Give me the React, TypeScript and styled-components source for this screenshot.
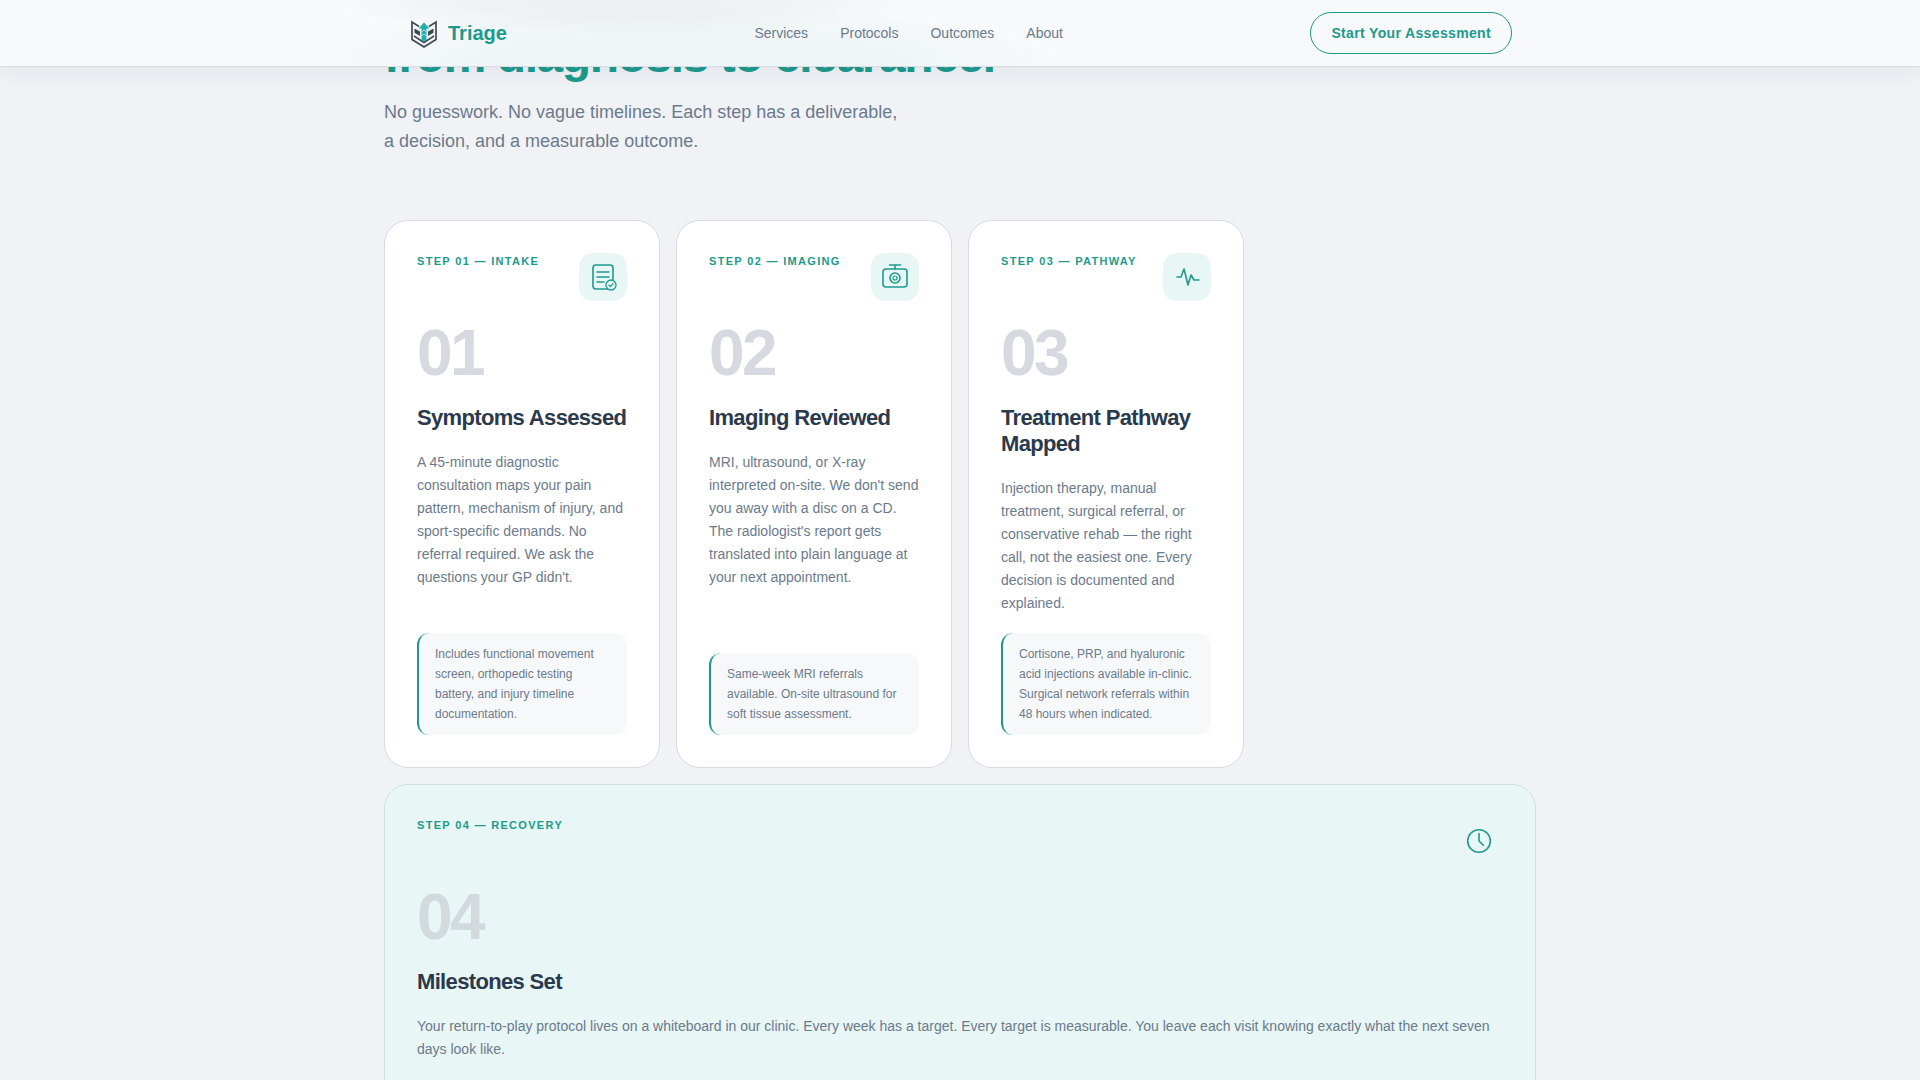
import React from "react";
import styled, { createGlobalStyle } from "styled-components";

const TEAL = "#1d9a8d";
const MUTED = "#6b7a8d";
const INK = "#2a3a4c";

const GlobalStyle = createGlobalStyle`
  *, *::before, *::after { box-sizing: border-box; }
  html { overflow: hidden; }
  body {
    margin: 0;
    background: #f0f2f6;
    color: ${INK};
    font-family: "Liberation Sans", Arial, sans-serif;
  }
  h2, h3, p, ul { margin: 0; padding: 0; }
`;

const Header = styled.header`
  position: sticky;
  top: 0;
  z-index: 10;
  background:
    radial-gradient(
      ellipse 300px 36px at calc(50% - 336px) 0,
      rgba(42, 56, 75, 0.05) 0%,
      rgba(42, 56, 75, 0.04) 50%,
      transparent 100%
    ),
    radial-gradient(
      ellipse 380px 60px at calc(50% - 270px) 100%,
      rgba(29, 154, 141, 0.04) 0%,
      rgba(29, 154, 141, 0.03) 60%,
      transparent 100%
    ),
    #f7f9fb;
  border-bottom: 1px solid #d9dde2;
  box-shadow: 0 4px 24px rgba(30, 41, 59, 0.07);
`;

const NavBar = styled.nav`
  display: flex;
  align-items: center;
  justify-content: space-between;
  max-width: 1152px;
  margin: 0 auto;
  padding: 12px 24px;
`;

const Brand = styled.a`
  display: flex;
  align-items: center;
  gap: 8px;
  color: ${TEAL};
  font-size: 20px;
  font-weight: 700;
  text-decoration: none;
`;

const NavLinks = styled.ul`
  display: flex;
  gap: 32px;
  list-style: none;
`;

const NavLink = styled.a`
  color: ${MUTED};
  font-size: 14px;
  text-decoration: none;
`;

const CtaButton = styled.button`
  height: 42px;
  padding: 0 20px;
  border: 1px solid ${TEAL};
  border-radius: 21px;
  background: transparent;
  color: ${TEAL};
  font: 700 14px "Liberation Sans", Arial, sans-serif;
  letter-spacing: 0.025em;
  cursor: pointer;
`;

const Section = styled.section`
  max-width: 1200px;
  margin: -38px auto 0;
  padding: 0 24px 96px;
`;

const Heading = styled.h2`
  color: ${TEAL};
  font-size: 48px;
  line-height: 53px;
  letter-spacing: -0.03em;
`;

const Lead = styled.p`
  max-width: 520px;
  margin: 16px 0 64px;
  color: ${MUTED};
  font-size: 18px;
  line-height: 29px;
`;

const Steps = styled.div`
  display: grid;
  grid-template-columns: repeat(4, 1fr);
  gap: 16px;
`;

const Card = styled.article<{ $wide?: boolean }>`
  grid-column: ${(p) => (p.$wide ? "1 / -1" : "auto")};
  display: flex;
  flex-direction: column;
  padding: 32px;
  border: 1px solid ${(p) => (p.$wide ? "#c9e2e0" : "#d8dae2")};
  border-radius: 24px;
  background: ${(p) => (p.$wide ? "#e8f6f5" : "#ffffff")};
`;

const CardTop = styled.div`
  display: flex;
  align-items: flex-start;
  justify-content: space-between;
  margin-bottom: 20px;
`;

const StepLabel = styled.span`
  color: ${TEAL};
  font-size: 11px;
  font-weight: 700;
  line-height: 16px;
  letter-spacing: 0.12em;
  text-transform: uppercase;
`;

const IconTile = styled.span`
  display: grid;
  place-items: center;
  width: 48px;
  height: 48px;
  border-radius: 14px;
  background: #e8f6f5;
`;

const StepNumber = styled.span<{ $wide?: boolean }>`
  margin-bottom: 20px;
  color: ${(p) => (p.$wide ? "#d3dade" : "#d6d9e0")};
  font-size: 64px;
  font-weight: 700;
  line-height: 64px;
  letter-spacing: -0.04em;
`;

const CardTitle = styled.h3`
  margin-bottom: 20px;
  font-size: 22px;
  line-height: 26px;
  letter-spacing: -0.03em;
`;

const CardText = styled.p`
  margin-bottom: 18px;
  color: ${MUTED};
  font-size: 14px;
  line-height: 23px;
`;

const Note = styled.p`
  margin-top: auto;
  padding: 11px 16px;
  border-left: 2px solid ${TEAL};
  border-radius: 12px;
  background: #f7f8fa;
  color: ${MUTED};
  font-size: 12px;
  line-height: 20px;
`;

const Logo = () => (
  <svg width="32" height="32" viewBox="0 0 32 32" fill="none" aria-hidden="true">
    <path
      d="M11 9.500L4 5v17.500l12 7.500 12-7.500V5l-7 4.500"
      stroke="#3f4853"
      strokeWidth="1.700"
    />
    <path d="M6.500 11.500l5.500 3v4.500l-5.500-3.200zM25.500 11.500l-5.500 3v4.500l5.500-3.200z" fill="#3f4853" />
    <path d="M6 19l10 6.500L26 19" stroke="#3f4853" strokeWidth="1.500" />
    <path d="M16 5.500l5.500 6h-3V22a2.500 2.500 0 0 1-5 0V11.500h-3z" fill="#1fb0ac" />
    <path d="M13.500 15l2.500-2 2.500 2M13.500 19l2.500-2 2.500 2" stroke="#b4e4e1" strokeWidth="1" />
  </svg>
);

const LineIcon = ({ children }: { children: React.ReactNode }) => (
  <svg
    width="28"
    height="28"
    viewBox="0 0 28 28"
    fill="none"
    stroke={TEAL}
    strokeWidth="1.600"
    strokeLinecap="round"
    strokeLinejoin="round"
    aria-hidden="true"
  >
    {children}
  </svg>
);

const IntakeIcon = () => (
  <LineIcon>
    <rect x="4" y="2" width="20" height="24" rx="3" />
    <path d="M8 9h12M8 14h12M8 19h7" />
    <circle cx="22" cy="22" r="5" fill="#e8f6f5" strokeWidth="1.300" />
    <path d="M20 22.200l1.500 1.400 2.600-3" strokeWidth="1.300" />
  </LineIcon>
);

const ImagingIcon = () => (
  <LineIcon>
    <rect x="2" y="6" width="24" height="18" rx="3" />
    <path d="M14 6V2M8.500 2h11" />
    <circle cx="14" cy="15" r="5" />
    <circle cx="14" cy="15" r="2" strokeWidth="1.200" />
  </LineIcon>
);

const PathwayIcon = () => (
  <LineIcon>
    <path d="M4 14h4l3-8 4 16 3-10 3 5h5" />
  </LineIcon>
);

const RecoveryIcon = () => (
  <LineIcon>
    <circle cx="14" cy="14" r="11.300" />
    <path d="M14 6.500V14l4.300 4.300" />
  </LineIcon>
);

type Step = {
  number: string;
  label: string;
  title: string;
  text: string;
  note: string;
  Icon: () => React.ReactElement;
  wide?: boolean;
};

const steps: Step[] = [
  {
    number: "01",
    label: "Intake",
    title: "Symptoms Assessed",
    text: "A 45-minute diagnostic consultation maps your pain pattern, mechanism of injury, and sport-specific demands. No referral required. We ask the questions your GP didn't.",
    note: "Includes functional movement screen, orthopedic testing battery, and injury timeline documentation.",
    Icon: IntakeIcon,
  },
  {
    number: "02",
    label: "Imaging",
    title: "Imaging Reviewed",
    text: "MRI, ultrasound, or X-ray interpreted on-site. We don't send you away with a disc on a CD. The radiologist's report gets translated into plain language at your next appointment.",
    note: "Same-week MRI referrals available. On-site ultrasound for soft tissue assessment.",
    Icon: ImagingIcon,
  },
  {
    number: "03",
    label: "Pathway",
    title: "Treatment Pathway Mapped",
    text: "Injection therapy, manual treatment, surgical referral, or conservative rehab — the right call, not the easiest one. Every decision is documented and explained.",
    note: "Cortisone, PRP, and hyaluronic acid injections available in-clinic. Surgical network referrals within 48 hours when indicated.",
    Icon: PathwayIcon,
  },
  {
    number: "04",
    label: "Recovery",
    title: "Milestones Set",
    text: "Your return-to-play protocol lives on a whiteboard in our clinic. Every week has a target. Every target is measurable. You leave each visit knowing exactly what the next seven days look like.",
    note: "",
    Icon: RecoveryIcon,
    wide: true,
  },
];

const links = ["Services", "Protocols", "Outcomes", "About"];

export default function App() {
  return (
    <>
      <GlobalStyle />
      <Header>
        <NavBar aria-label="Main">
          <Brand href="#home">
            <Logo />
            Triage
          </Brand>
          <NavLinks>
            {links.map((name) => (
              <li key={name}>
                <NavLink href={`#${name.toLowerCase()}`}>{name}</NavLink>
              </li>
            ))}
          </NavLinks>
          <CtaButton type="button">Start Your Assessment</CtaButton>
        </NavBar>
      </Header>
      <main>
        <Section id="protocols">
          <Heading>from diagnosis to clearance.</Heading>
          <Lead>
            No guesswork. No vague timelines. Each step has a deliverable, a
            decision, and a measurable outcome.
          </Lead>
          <Steps>
            {steps.map(({ number, label, title, text, note, Icon, wide }) => (
              <Card key={number} $wide={wide}>
                <CardTop>
                  <StepLabel>
                    Step {number} — {label}
                  </StepLabel>
                  <IconTile>
                    <Icon />
                  </IconTile>
                </CardTop>
                <StepNumber $wide={wide}>{number}</StepNumber>
                <CardTitle>{title}</CardTitle>
                <CardText>{text}</CardText>
                {note && <Note>{note}</Note>}
              </Card>
            ))}
          </Steps>
        </Section>
      </main>
    </>
  );
}
